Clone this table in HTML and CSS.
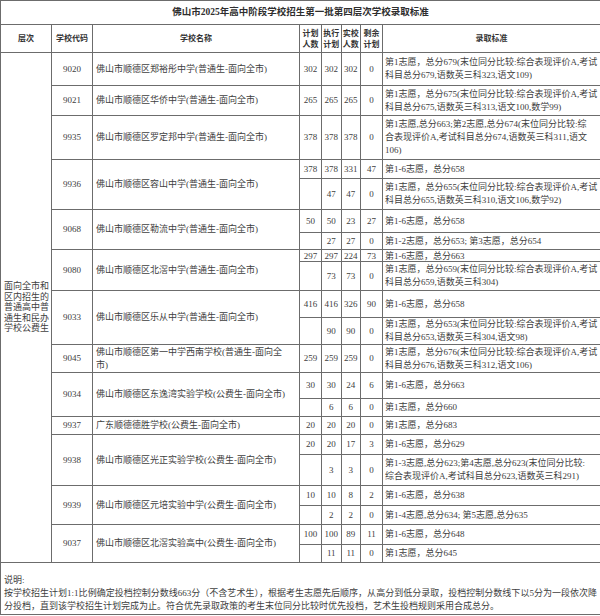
FILE: index.html
```html
<!DOCTYPE html>
<html lang="zh-CN">
<head>
<meta charset="utf-8">
<title>佛山市2025年高中阶段学校招生第一批第四层次学校录取标准</title>
<link rel="stylesheet" href="styles.css">
</head>
<body>
<table class="sheet">
  <colgroup>
    <col class="c-level"><col class="c-code"><col class="c-name"><col class="c-n"><col class="c-n2"><col class="c-n2"><col class="c-n"><col class="c-std">
  </colgroup>
  <tr class="h24"><td class="title" colspan="8">佛山市2025年高中阶段学校招生第一批第四层次学校录取标准</td></tr>
  <tr class="h28 head">
    <td>层次</td><td>学校代码</td><td>学校名称</td><td>计划<br>人数</td><td>执行<br>计划</td><td>实校<br>人数</td><td>剩余<br>计划</td><td>录取标准</td>
  </tr>
  <tr class="h33">
    <td class="level" rowspan="21">面向全市和<br>区内招生的<br>普通高中普<br>通生和民办<br>学校公费生</td>
    <td>9020</td><td class="name">佛山市顺德区郑裕彤中学(普通生-面向全市)</td>
    <td>302</td><td>302</td><td>302</td><td>0</td>
    <td class="std">第1志愿，总分679(末位同分比较:综合表现评价A,考试<br>科目总分679,语数英三科323,语文109)</td>
  </tr>
  <tr class="h30">
    <td>9021</td><td class="name">佛山市顺德区华侨中学(普通生-面向全市)</td>
    <td>265</td><td>265</td><td>265</td><td>0</td>
    <td class="std">第1志愿，总分675(末位同分比较:综合表现评价A,考试<br>科目总分675,语数英三科313,语文100,数学99)</td>
  </tr>
  <tr class="h44">
    <td>9935</td><td class="name">佛山市顺德区罗定邦中学(普通生-面向全市)</td>
    <td>378</td><td>378</td><td>378</td><td>0</td>
    <td class="std">第1志愿,总分663;第2志愿,总分674(末位同分比较:综<br>合表现评价A,考试科目总分674,语数英三科311,语文<br>106)</td>
  </tr>
  <tr class="h19">
    <td rowspan="2">9936</td><td class="name" rowspan="2">佛山市顺德区容山中学(普通生-面向全市)</td>
    <td>378</td><td>378</td><td>331</td><td>47</td>
    <td class="std">第1-6志愿，总分658</td>
  </tr>
  <tr class="h31">
    <td></td><td>47</td><td>47</td><td>0</td>
    <td class="std">第1志愿，总分655(末位同分比较:综合表现评价A,考试<br>科目总分655,语数英三科310,语文106,数学92)</td>
  </tr>
  <tr class="h23">
    <td rowspan="2">9068</td><td class="name" rowspan="2">佛山市顺德区勒流中学(普通生-面向全市)</td>
    <td>50</td><td>50</td><td>23</td><td>27</td>
    <td class="std">第1-6志愿，总分658</td>
  </tr>
  <tr class="h17">
    <td></td><td>27</td><td>27</td><td>0</td>
    <td class="std">第1-2志愿，总分653; 第3志愿，总分654</td>
  </tr>
  <tr class="h12 tight">
    <td rowspan="2">9080</td><td class="name" rowspan="2">佛山市顺德区北滘中学(普通生-面向全市)</td>
    <td>297</td><td>297</td><td>224</td><td>73</td>
    <td class="std">第1-6志愿，总分663</td>
  </tr>
  <tr class="h29">
    <td></td><td>73</td><td>73</td><td>0</td>
    <td class="std">第1志愿，总分659(末位同分比较:综合表现评价A,考试<br>科目总分659,语数英三科304)</td>
  </tr>
  <tr class="h27">
    <td rowspan="2">9033</td><td class="name" rowspan="2">佛山市顺德区乐从中学(普通生-面向全市)</td>
    <td>416</td><td>416</td><td>326</td><td>90</td>
    <td class="std">第1-6志愿，总分658</td>
  </tr>
  <tr class="h26">
    <td></td><td>90</td><td>90</td><td>0</td>
    <td class="std">第1志愿，总分653(末位同分比较:综合表现评价A,考试<br>科目总分653,语数英三科304,语文98)</td>
  </tr>
  <tr class="h28">
    <td>9045</td><td class="name">佛山市顺德区第一中学西南学校(普通生-面向全<br>市)</td>
    <td>259</td><td>259</td><td>259</td><td>0</td>
    <td class="std">第1志愿，总分676(末位同分比较:综合表现评价A,考试<br>科目总分676,语数英三科312,语文106)</td>
  </tr>
  <tr class="h26">
    <td rowspan="2">9034</td><td class="name" rowspan="2">佛山市顺德区东逸湾实验学校(公费生-面向全市)</td>
    <td>30</td><td>30</td><td>24</td><td>6</td>
    <td class="std">第1-6志愿，总分663</td>
  </tr>
  <tr class="h18">
    <td></td><td>6</td><td>6</td><td>0</td>
    <td class="std">第1志愿，总分660</td>
  </tr>
  <tr class="h18">
    <td>9937</td><td class="name">广东顺德德胜学校(公费生-面向全市)</td>
    <td>20</td><td>20</td><td>20</td><td>0</td>
    <td class="std">第1志愿，总分683</td>
  </tr>
  <tr class="h20">
    <td rowspan="2">9938</td><td class="name" rowspan="2">佛山市顺德区光正实验学校(公费生-面向全市)</td>
    <td>20</td><td>20</td><td>17</td><td>3</td>
    <td class="std">第1-6志愿，总分629</td>
  </tr>
  <tr class="h31">
    <td></td><td>3</td><td>3</td><td>0</td>
    <td class="std">第1-3志愿,总分623;第4志愿,总分623(末位同分比较:<br>综合表现评价A,考试科目总分623,语数英三科291)</td>
  </tr>
  <tr class="h20">
    <td rowspan="2">9939</td><td class="name" rowspan="2">佛山市顺德区元培实验中学(公费生-面向全市)</td>
    <td>10</td><td>10</td><td>8</td><td>2</td>
    <td class="std">第1-6志愿，总分638</td>
  </tr>
  <tr class="h19">
    <td></td><td>2</td><td>2</td><td>0</td>
    <td class="std">第1-4志愿,总分634; 第5志愿,总分635</td>
  </tr>
  <tr class="h20">
    <td rowspan="2">9037</td><td class="name" rowspan="2">佛山市顺德区北滘实验高中(公费生-面向全市)</td>
    <td>100</td><td>100</td><td>89</td><td>11</td>
    <td class="std">第1-6志愿，总分648</td>
  </tr>
  <tr class="h18">
    <td></td><td>11</td><td>11</td><td>0</td>
    <td class="std">第1志愿，总分645</td>
  </tr>
  <tr class="h52">
    <td class="notes" colspan="8">
      <div>说明:</div>
      <div class="full">按学校招生计划1:1比例确定投档控制分数线663分（不含艺术生），根据考生志愿先后顺序，从高分到低分录取，投档控制分数线下以5分为一段依次降</div>
      <div>分投档，直到该学校招生计划完成为止。符合优先录取政策的考生末位同分比较时优先投档，艺术生投档规则采用合成总分。</div>
    </td>
  </tr>
</table>
</body>
</html>
```
FILE: styles.css
```css
html, body {
  margin: 0;
  padding: 0;
  background: #ffffff;
}
body {
  font-family: "Liberation Serif", "Noto Sans CJK SC", serif;
  color: #404040;
  font-size: 9px;
}
.sheet {
  width: 600px;
  border-collapse: collapse;
  table-layout: fixed;
}
.c-level { width: 51px; }
.c-code { width: 41px; }
.c-name { width: 207px; }
.c-n { width: 22px; }
.c-n2 { width: 19.5px; }
.c-std { width: 218px; }

.sheet td {
  border: 1px solid #6c6c6c;
  padding: 0 1px;
  text-align: center;
  vertical-align: middle;
  line-height: 13px;
  white-space: nowrap;
  overflow: hidden;
}
.sheet td.title {
  font-size: 9.5px;
  font-weight: bold;
  color: #2e2e2e;
}
.head td {
  font-size: 8px;
  font-weight: bold;
  line-height: 11px;
  color: #333;
}
.sheet td.level {
  text-align: left;
  font-size: 9px;
  line-height: 10.5px;
  padding: 0 0 0 3px;
}
.sheet td.name {
  text-align: left;
  padding-left: 3px;
}
.sheet td.std {
  text-align: left;
  padding-left: 2px;
}
.tight td {
  line-height: 10px;
}
.sheet td.notes {
  text-align: left;
  vertical-align: top;
  padding: 11px 3px 0 3px;
  line-height: 13px;
}
.notes .full {
  text-align: justify;
  text-align-last: justify;
}

.h12 { height: 12px; }
.h17 { height: 17px; }
.h18 { height: 18px; }
.h19 { height: 19px; }
.h20 { height: 20px; }
.h23 { height: 23px; }
.h24 { height: 24px; }
.h26 { height: 26px; }
.h27 { height: 27px; }
.h28 { height: 28px; }
.h29 { height: 29px; }
.h30 { height: 30px; }
.h31 { height: 31px; }
.h33 { height: 33px; }
.h44 { height: 44px; }
.h52 { height: 52px; }
```
